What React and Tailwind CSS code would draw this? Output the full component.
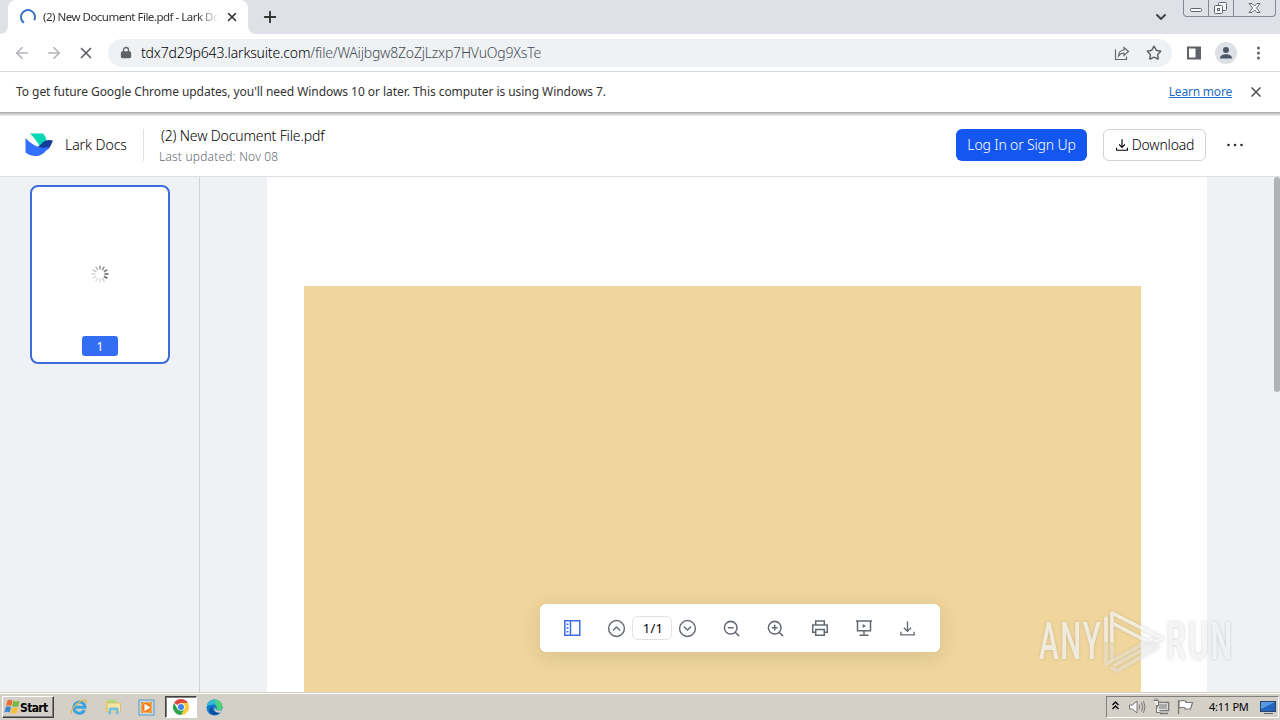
import {
  ArrowLeft, ArrowRight, X, Plus, ChevronDown, Lock, Star, CircleChevronUp, CircleChevronDown,
  ZoomIn, ZoomOut,
} from 'lucide-react'

function LoadingRing() {
  return (
    <svg className="w-4 h-4" viewBox="0 0 16 16" fill="none" stroke="#3976c8" strokeWidth="2">
      <path d="M4 13.8A7 7 0 1 1 14.2 11.3" />
    </svg>
  )
}

function LarkLogo() {
  return (
    <svg className="w-7 h-7" viewBox="0 0 28 28">
      <path d="M5 2.500h13c2 2 3.200 4.500 3.600 7.500L15 16C12.500 11 9 6.500 5 2.500z" fill="#08d6b4" />
      <path d="M28 9.700c-4-1.400-8-.5-11 2.600-2.500 2.600-4.600 4.500-8 5.600 8 4 14 2 16.500-3z" fill="#133c9a" />
      <path d="M.5 7c5 5.500 11 9.200 16.500 9.600 2.500.2 5-.3 7-1.200C20 22.500 15 25.500 9.500 25 6 24.700 3 23.500.5 21.500z" fill="#3370ff" />
    </svg>
  )
}

function DownloadIcon({ className }) {
  return (
    <svg className={className} viewBox="0 0 16 16" fill="none" stroke="currentColor" strokeWidth="1.3">
      <path d="M8 1.500v9M4.600 7.300 8 10.700l3.400-3.400M1.800 11v3h12.400v-3" />
    </svg>
  )
}

// Doze traços girados, do mais escuro ao mais claro
function Spinner() {
  const tons = [0.6, 0.65, 0.75, 0.95, 0.9, 0.3, 0.2, 0.18, 0.18, 0.25, 0.3, 0.4]
  return (
    <svg className="w-5 h-5" viewBox="0 0 20 20" stroke="#555" strokeWidth="1.500">
      {tons.map((o, i) => (
        <path key={i} d="M10 1.500v4" opacity={o} transform={`rotate(${i * 30} 10 10)`} />
      ))}
    </svg>
  )
}

function TabStrip() {
  return (
    <div className="flex h-[34px] bg-[#dee1e8] shrink-0">
      <div className="w-2 bg-white"><div className="h-full bg-[#dee1e8] rounded-br-lg" /></div>
      <div className="w-60 bg-[#dee1e8]">
        <div className="h-full flex items-center bg-white rounded-t-lg pl-3">
          <LoadingRing />
          <span className="ml-[7px] w-[176px] overflow-hidden whitespace-nowrap text-[11.500px] tracking-[-0.500px] text-[#333] [mask-image:linear-gradient(to_right,black_88%,transparent)]">
            (2) New Document File.pdf - Lark Docs
          </span>
          <X className="ml-[6px] w-3.5 h-3.5 text-[#333]" strokeWidth={2.800} />
        </div>
      </div>
      <div className="w-2 bg-white"><div className="h-full bg-[#dee1e8] rounded-bl-lg" /></div>
      <Plus className="w-[18px] h-[18px] mt-2 ml-[5px] text-[#333]" strokeWidth={2.500} />
      <div className="flex-1" />
      <ChevronDown className="w-4 h-4 mt-[9px] mr-[14px] text-[#444]" strokeWidth={3} />
      <div className="flex w-[93px] h-[17px] mr-[4px] border border-t-0 border-[#858992] rounded-b">
        <svg width="91" height="16" viewBox="0 0 91 16" fill="none" stroke="#62666d">
          <path d="M24.500 0v16M49.500 0v16" stroke="#858992" />
          <rect x="6.500" y="8.500" width="11" height="3" rx="1" fill="#f7f7f9" />
          <rect x="34.500" y="2.500" width="8" height="8" rx="1" fill="#f7f7f9" />
          <rect x="30.500" y="5.500" width="8" height="8" rx="1" fill="#f7f7f9" />
          <rect x="33.500" y="8.500" width="2" height="2" />
          <path d="M65 3.500h3l2.500 2.500L73 3.500h3L72.500 8l3.500 4.500h-3L70.500 10 68 12.500h-3L68.500 8z" fill="#f7f7f9" />
        </svg>
      </div>
    </div>
  )
}

function Toolbar() {
  return (
    <div className="flex items-center h-[38px] shrink-0 pl-[13px] pr-3 border-b border-[#d8dadd]">
      <ArrowLeft className="w-[18px] h-[18px] text-[#b2b4b8]" strokeWidth={2.200} />
      <ArrowRight className="w-[18px] h-[18px] ml-[14px] text-[#b2b4b8]" strokeWidth={2.200} />
      <X className="w-[18px] h-[18px] ml-[14px] text-[#5f6368]" strokeWidth={2.300} />
      <div className="flex items-center h-7 w-[1064px] ml-[13px] pl-[12px] pr-2.5 rounded-full bg-[#eff2f5]">
        <Lock className="w-[12px] h-[13px] text-[#5f6368] [&_rect]:fill-current" strokeWidth={2.600} />
        <span className="ml-[9px] text-[14px] font-light tracking-[-0.200px] text-[#454b52] whitespace-nowrap">
          <span className="text-black tracking-[-0.150px]">tdx7d29p643.larksuite.com</span>/file/WAijbgw8ZoZjLzxp7HVuOg9XsTe
        </span>
        <div className="flex-1" />
        <svg className="w-4 h-4" viewBox="0 0 16 16" fill="none" stroke="#62666b" strokeWidth="1.200">
          <path d="M1.500 4.500v10h11v-3M4.500 11c.3-4 2.500-6 5.500-6V2.500L14.500 6.500 10 10.500V8c-2.500 0-4 .8-5.500 3z" />
        </svg>
        <Star className="w-4 h-4 ml-4" color="#5f6368" strokeWidth={2.200} />
      </div>
      <svg className="w-4 h-4 ml-[14px]" viewBox="0 0 16 16">
        <path d="M1 1.500h14v13H1zM3 3.500v9h6.500v-9z" fill="#5f6368" fillRule="evenodd" />
      </svg>
      <svg className="w-[22px] h-[22px] ml-[13px]" viewBox="0 0 22 22">
        <circle cx="11" cy="11" r="11" fill="#dde0e5" />
        <circle cx="11" cy="8" r="3" fill="#4d5768" />
        <path d="M5 16.500c0-3 3-4.300 6-4.300s6 1.300 6 4.300z" fill="#4d5768" />
      </svg>
      <svg className="w-4 h-4 ml-[13px]" viewBox="0 0 16 16" fill="#5f6368">
        <circle cx="8.500" cy="3" r="1.500" /><circle cx="8.500" cy="8" r="1.500" /><circle cx="8.500" cy="13" r="1.500" />
      </svg>
    </div>
  )
}

function UpdateBar() {
  return (
    <div className="flex items-center h-10 shrink-0 pl-4 pr-4 text-[12px] text-[#333]">
      <span className="tracking-[-0.053px] whitespace-nowrap">
        To get future Google Chrome updates, you'll need Windows 10 or later. This computer is using Windows 7.
      </span>
      <span className="ml-auto text-[#256bc4] underline tracking-[-0.200px]">Learn more</span>
      <X className="w-4 h-4 ml-4 text-[#555]" strokeWidth={2.500} />
    </div>
  )
}

function DocHeader() {
  return (
    <div className="flex items-center h-[61px] shrink-0 pl-[25px] pr-[37px] pb-0.5 border-b border-[#dee0e3] text-black">
      <LarkLogo />
      <span className="ml-3 w-[62px] pb-px text-[14px] font-light whitespace-nowrap tracking-[-0.050px]">Lark Docs</span>
      <div className="w-px h-8 ml-4 bg-[#dee0e3]" />
      <div className="ml-[15px] pt-px flex flex-col">
        <span className="h-5 leading-5 pl-0.5 text-[14px] font-light tracking-[-0.150px] text-black">(2) New Document File.pdf</span>
        <span className="h-5 leading-[22px] text-[12px] font-light text-[#646a73] tracking-[0.200px]">Last updated: Nov 08</span>
      </div>
      <button className="ml-auto w-[131px] h-8 pb-0.5 rounded-md bg-[#1456f0] text-white text-[14px] font-light whitespace-nowrap tracking-[-0.160px]">Log In or Sign Up</button>
      <button className="ml-4 w-[103px] h-8 pb-0.5 flex items-center justify-center rounded-md border border-[#d0d3d6] text-[14px] font-light tracking-[-0.200px]">
        <DownloadIcon className="w-3.5 h-3.5 mr-[3px] mt-px" />Download
      </button>
      <svg className="w-4 h-4 ml-[21px]" viewBox="0 0 16 16" fill="#2b2f36">
        <circle cx="1.500" cy="8" r="1.300" /><circle cx="8" cy="8" r="1.300" /><circle cx="14.500" cy="8" r="1.300" />
      </svg>
    </div>
  )
}

function ViewerToolbar() {
  return (
    <div className="absolute left-[540px] top-[427px] w-[400px] h-12 pl-[23px] flex items-center bg-white rounded-md text-[#646a73] shadow-[0_4px_20px_rgba(31,35,41,0.13)]">
      <svg className="w-[18px] h-[18px]" viewBox="0 0 18 18" fill="none" stroke="#3d6ee6" strokeWidth="1.500">
        <path d="M1.800 1.700h15v14.600h-15zM7.500 1.700v14.600M3.500 5.200h2M3.500 9h2M3.500 12.800h2" />
      </svg>
      <CircleChevronUp className="w-[19px] h-[19px] ml-[26px]" strokeWidth={1.800} />
      <div className="w-10 h-6 ml-[6px] flex items-center justify-center rounded-md border border-[#dee0e3] text-[13px] text-black pt-0.5 pl-0.5 tracking-[0.300px]">1/1</div>
      <CircleChevronDown className="w-[19px] h-[19px] ml-[6px]" strokeWidth={1.800} />
      <ZoomOut className="w-[19px] h-[19px] ml-[25px]" strokeWidth={1.900} />
      <ZoomIn className="w-[19px] h-[19px] ml-[25px]" strokeWidth={1.900} />
      <svg className="w-[18px] h-[18px] ml-[25.500px]" viewBox="0 0 18 18" fill="none" stroke="currentColor" strokeWidth="1.500">
        <path d="M4.700 6V2h8.600v4M4.500 13.200H1.700V6h14.600v7.200h-2.800M4.700 10.500h8.600v5.800H4.700z" />
      </svg>
      <svg className="w-[18px] h-[18px] ml-[26px]" viewBox="0 0 18 18" fill="none" stroke="currentColor" strokeWidth="1.500">
        <path d="M1 2h16M2.500 2v9.700h13V2M9 11.700v4.300M4.500 16.300h9" />
        <path d="M7.700 5v4l3.300-2z" fill="currentColor" stroke="none" />
      </svg>
      <DownloadIcon className="w-[17px] h-[17px] ml-[26.500px]" />
    </div>
  )
}

function Watermark() {
  return (
    <svg className="absolute left-[1030px] top-[425px]" width="215" height="80" viewBox="0 0 215 80">
      <defs>
        <linearGradient id="fade" x1="0" y1="20" x2="0" y2="58" gradientUnits="userSpaceOnUse">
          <stop offset="0.5" stopColor="#fff" stopOpacity="0.65" />
          <stop offset="0.55" stopColor="#f2f2f2" stopOpacity="0.4" />
        </linearGradient>
        <filter id="shade" x="-10%" y="-10%" width="120%" height="120%">
          <feDropShadow dx="0" dy="0" stdDeviation="1.700" floodColor="#777" floodOpacity="0.6" />
        </filter>
      </defs>
      <g filter="url(#shade)" fill="url(#fade)" fontFamily="Roboto, sans-serif" fontSize="51" fontWeight="500">
        <text transform="translate(9 57) scale(.58 1)" letterSpacing="3">ANY</text>
        <text transform="translate(136.500 57) scale(.6 1)" letterSpacing="4">RUN</text>
        <path d="M82 57V11L132 36.500 85 63M82 21 128 45 87 69 82 66M76 16V62L121 38" fill="none" stroke="url(#fade)" strokeWidth="3.500" strokeLinejoin="round" strokeLinecap="round" />
      </g>
    </svg>
  )
}

function Viewer() {
  return (
    <div className="relative flex h-[515px] shrink-0 overflow-hidden bg-[#eff2f5]">
      <div className="w-[200px] shrink-0 border-r border-[#cfd2d6] pl-[30px] pt-2">
        <div className="w-[140px] h-[179px] flex flex-col items-center bg-white border-2 border-[#3d6ddd] rounded-lg">
          <div className="mt-[77px]"><Spinner /></div>
          <div className="w-9 h-5 mt-[52px] rounded-[3px] bg-[#336df4] text-white text-[12px] leading-[21px] text-center">1</div>
        </div>
      </div>
      <div className="w-[940px] ml-[67px] shrink-0 bg-white pt-[109px] pl-[37px]">
        <div className="w-[837px] h-[406px] bg-[#f0d69c]" />
      </div>
      <div className="w-[6px] h-[215px] ml-auto bg-[#b0b2b5] rounded-full" />
      <ViewerToolbar />
      <Watermark />
    </div>
  )
}

function WindowsFlag() {
  return (
    <svg className="w-4 h-4 shrink-0" viewBox="0 0 16 16">
      <path d="M3.500 1.500q2.500-1.500 5 0L7.300 7q-2.500-1.400-5.300 0z" fill="#ed6a32" />
      <path d="M9.300 1.800q3 1.400 6.500 0L14.300 7.300q-3 1.400-6.300 0z" fill="#78b746" />
      <path d="M1.800 8q2.500-1.400 5.200 0L5.800 13.500q-2.500-1.500-5.500 0z" fill="#3d87d0" />
      <path d="M7.800 8.300q3 1.500 6.300 0l-1.300 5.600q-3 1.400-6.300 0z" fill="#f5c13b" />
    </svg>
  )
}

function ExplorerE() {
  return (
    <svg className="w-[18px] h-[18px]" viewBox="0 0 18 18" fill="none">
      <path d="M14.500 12A5.600 5.600 0 1 1 15 9.200H5" stroke="#3ba4df" strokeWidth="3" />
      <path d="M2 15.500C-1 12 10 1 15.500 2.200c1.200.3 1.300 1.600.5 3" stroke="#dfb94c" strokeWidth="1.300" />
    </svg>
  )
}

function FolderIcon() {
  return (
    <svg className="w-[18px] h-[18px]" viewBox="0 0 18 18">
      <path d="M1.500 3h5l1 1.500h7V14h-13z" fill="#e9ce72" />
      <path d="M4 1.500h8v7H4z" fill="#b7db83" />
      <path d="M3 5h13.500v9H3z" fill="#f5e5a2" stroke="#cfb45b" strokeWidth=".6" />
      <path d="M4.500 16.500V11q0-1.500 1.500-1.500h7q1.500 0 1.500 1.500v5.500H12v-4H7v4z" fill="#77bee5" />
    </svg>
  )
}

function MediaIcon() {
  return (
    <svg className="w-[17px] h-[17px]" viewBox="0 0 17 17">
      <rect x="1" y="1" width="15" height="15" fill="#b9dcf2" stroke="#5c9ac8" />
      <rect x="3" y="3" width="11" height="11" fill="#f1902d" />
      <circle cx="8.500" cy="8.500" r="5.500" fill="#f17e1b" stroke="#fac47e" />
      <path d="m6.500 4.800 6 3.700-6 3.700z" fill="#fff" />
    </svg>
  )
}

function ChromeIcon() {
  return (
    <svg className="w-4 h-4" viewBox="0 0 16 16">
      <path d="M8 8 1.070 4A8 8 0 0 1 14.930 4L8 4z" fill="#dd4b3e" />
      <path d="M8 8V4h6.930A8 8 0 0 1 8 16l3.460-6z" fill="#fbcb3c" />
      <path d="m8 8 3.460 2L8 16A8 8 0 0 1 1.070 4l3.470 6z" fill="#2ba24c" />
      <circle cx="8" cy="8" r="3.800" fill="#fff" />
      <circle cx="8" cy="8" r="3" fill="#4285e8" />
    </svg>
  )
}

function EdgeIcon() {
  return (
    <svg className="w-[17px] h-[17px]" viewBox="0 0 17 17">
      <circle cx="8.500" cy="8.500" r="8" fill="#1478c8" />
      <path d="M.5 8.500a8 8 0 0 1 16 0c0 3-4 3.500-5.800 2 .8-3-1-5-3.700-5C3.500 5.500 1 7 .5 8.500z" fill="#35b9d5" />
      <path d="M9 .6c4.300.2 7.500 3.800 7.500 7.600 0 3-4 3.800-5.800 2.300C11.500 7 9 4 9 .6z" fill="#51cf7d" />
      <path d="M6.500 7.500c-1 4 2.500 7 7 5.500-2 3.200-6 3.500-8.500 1.500-2.300-2-1.500-5.500 1.500-7z" fill="#0e4b9b" />
      <path d="M9.500 8c-1 2.500 1.500 4.500 6.500 3l-1 2.500C10 14.500 6.500 11 9.500 8z" fill="#d4d0c8" />
    </svg>
  )
}

function Tray() {
  return (
    <div className="flex items-center h-[22px] w-[173px] ml-auto mr-px border border-[#808080] border-b-white border-r-white">
      <svg width="94" height="20" viewBox="0 0 94 20" fill="none" stroke="#777">
        <path d="m5.500 8 3-3 3 3M5.500 12l3-3 3 3" stroke="#111" strokeWidth="1.500" />
        <path d="M22.500 8h3l4.500-4v12l-4.500-4h-3z" fill="#fff" />
        <path d="M32 7.500q1.500 2.500 0 5M34.500 5.500q2.500 4.500 0 9M36.500 4q3 6 0 12" />
        <path d="M50.500 5.500h11v8h-11zM53 16.500h8" fill="#fff" strokeWidth="1.500" />
        <path d="M52 7h8v5h-8z" fill="#aaa" stroke="none" />
        <path d="M46.500 3.500h5v5h-2v7h4M48 1.500v2M50 1.500v2" fill="#eee" />
        <path d="M71.500 3v14M72 4.500q4-2 7 0v1h6.500L83.500 12H78v-1q-3-1.500-6 0z" fill="#fff" strokeWidth="1.200" />
      </svg>
      <span className="w-[49px] ml-[8px] whitespace-nowrap text-[11px] text-black tracking-[-0.250px]">4:11 PM</span>
      <svg className="ml-[2px]" width="16" height="16" viewBox="0 0 16 16">
        <rect x=".5" y="2.500" width="15" height="10" fill="#2364bd" stroke="#27446e" />
        <path d="M1 3h14L5 8 1 10z" fill="#589ae0" />
        <path d="M4 14.500h9" stroke="#5c6670" />
      </svg>
    </div>
  )
}

function Taskbar() {
  return (
    <div className="h-7 flex items-center shrink-0 bg-[#d4d0c8] pt-0.5 shadow-[inset_0_1px_0_#d4d0c8,inset_0_2px_0_#fff]">
      <div className="flex items-center w-[52px] h-[22px] ml-[2px] pl-px border border-white border-r-[#404040] border-b-[#404040] shadow-[inset_-1px_-1px_0_#808080] text-[12px] font-['DejaVu_Sans_Condensed','DejaVu_Sans',sans-serif] font-bold text-black tracking-[-0.650px]">
        <WindowsFlag /><span className="pt-0.5">Start</span>
      </div>
      <div className="flex items-center ml-4">
        <ExplorerE />
        <div className="ml-4"><FolderIcon /></div>
        <div className="ml-4"><MediaIcon /></div>
      </div>
      <div className="flex items-center justify-center w-8 h-[22px] ml-[10px] bg-white border border-[#404040] border-r-white border-b-white shadow-[inset_1px_1px_0_#808080]">
        <ChromeIcon />
      </div>
      <div className="ml-[9px]"><EdgeIcon /></div>
      <Tray />
    </div>
  )
}

export default function App() {
  return (
    <div className="w-[1280px] h-[720px] flex flex-col overflow-hidden bg-white font-['Noto_Sans','Open_Sans',sans-serif]">
      <TabStrip />
      <Toolbar />
      <UpdateBar />
      <div className="h-1 shrink-0 bg-linear-to-b from-[#a9a9a9] to-[#f3f3f3]" />
      <DocHeader />
      <Viewer />
      <Taskbar />
    </div>
  )
}
